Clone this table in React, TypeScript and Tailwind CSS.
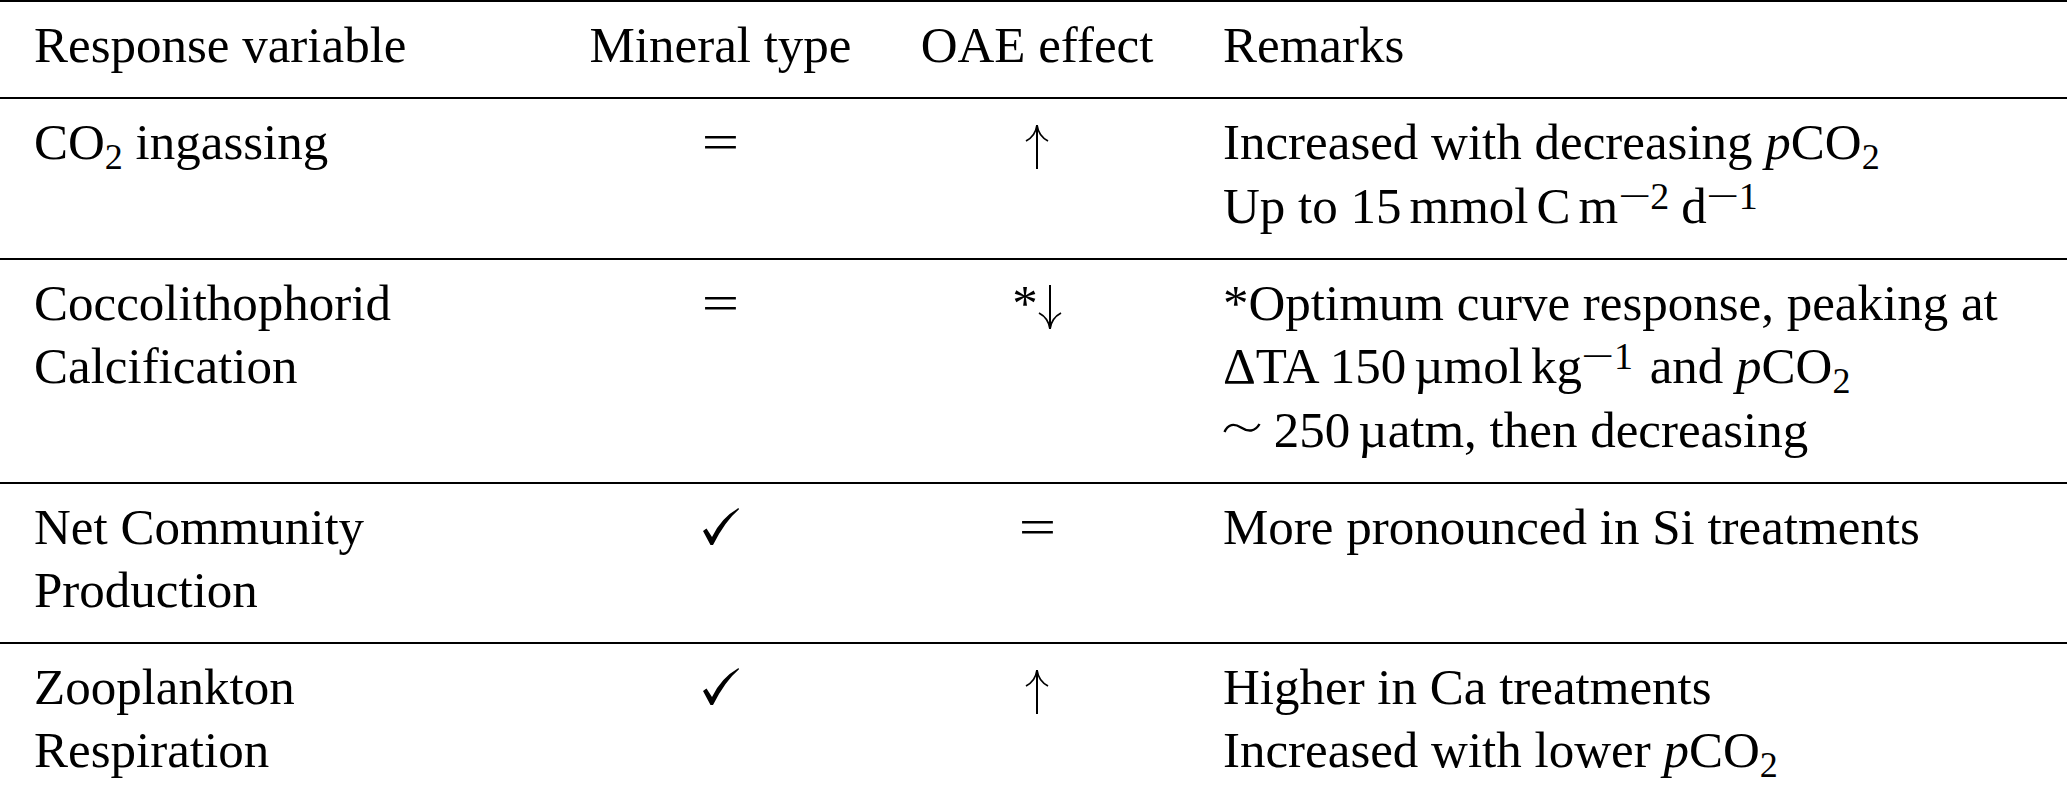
import React from 'react';

const Th = () => <span className="inline-block w-[8px]" />;

const Sub = ({ children }: { children: React.ReactNode }) => (
  <span className="text-[36px] leading-none align-[-10px]">{children}</span>
);

// superscript with a wide math-style minus
const Sup = ({ children }: { children: React.ReactNode }) => (
  <span className="text-[38px] leading-none align-[14px] pr-[4px]">
    <span className="inline-block w-[32px] text-center">
      <span className="inline-block scale-x-[1.55]">−</span>
    </span>
    {children}
  </span>
);

const PCO2 = () => (
  <>
    <i>p</i>CO<Sub>2</Sub>
  </>
);

const UpArrow = () => (
  <svg className="inline-block w-[24px] h-[45px] align-[-10px]" viewBox="0 0 24 45" fill="none" stroke="black" strokeWidth="2">
    <path d="M12 2 V45" />
    <path d="M12 1 Q10.5 12 1 17" strokeWidth="1.8" />
    <path d="M12 1 Q13.5 12 23 17" strokeWidth="1.8" />
  </svg>
);

const DownArrow = () => (
  <svg className="inline-block w-[24px] h-[45px] align-[-10px]" viewBox="0 0 24 45" fill="none" stroke="black" strokeWidth="2">
    <path d="M12 0 V43" />
    <path d="M12 44 Q10.5 33 1 28" strokeWidth="1.8" />
    <path d="M12 44 Q13.5 33 23 28" strokeWidth="1.8" />
  </svg>
);

const Check = () => (
  <svg className="inline-block w-[36px] h-[37px] align-[-1px]" viewBox="0 0 36 37" fill="black">
    <path d="M0 23 L3.5 20.5 L9 29 Q18 10 35.5 0 L36 1.2 Q22 13 10 37 L7.5 37 Z" />
  </svg>
);

const Tilde = () => (
  <svg className="inline-block w-[38px] h-[14px] align-[12px]" viewBox="0 0 38 14" fill="none" stroke="black" strokeWidth="2.4">
    <path d="M1.5 11 C5 3 11 2 18 6.5 C25 11 32 11 36.5 3" />
  </svg>
);

const Eq = () => <span className="inline-block scale-x-[1.3]">=</span>;

const rowCls = 'grid grid-cols-[554px_333px_300px_1fr] border-b-2 border-black';
const c1 = 'pl-[34px] pr-[35px] pt-3 pb-5 whitespace-nowrap';
const cMid = 'px-[20px] pt-3 pb-5 text-center whitespace-nowrap';
const c4 = 'pl-[36px] pr-[20px] pt-3 pb-5 whitespace-nowrap';

export default function App() {
  return (
    <div className="w-[2067px] bg-white text-black font-['Liberation_Serif','Times_New_Roman',serif] text-[51px] leading-[63px]">
      <div className="border-t-2 border-black">
        <div className={rowCls}>
          <div className={c1}>Response variable</div>
          <div className={cMid}>Mineral type</div>
          <div className={cMid}>OAE effect</div>
          <div className={c4}>Remarks</div>
        </div>

        <div className={rowCls}>
          <div className={c1}>
            CO<Sub>2</Sub> ingassing
          </div>
          <div className={cMid}>
            <Eq />
          </div>
          <div className={cMid}>
            <UpArrow />
          </div>
          <div className={c4}>
            Increased with decreasing <PCO2 />
            <br />
            Up to 15<Th />mmol<Th />C<Th />m<Sup>2</Sup>
            <Th />d<Sup>1</Sup>
          </div>
        </div>

        <div className={rowCls}>
          <div className={c1}>
            Coccolithophorid
            <br />
            Calcification
          </div>
          <div className={cMid}>
            <Eq />
          </div>
          <div className={cMid}>
            *<DownArrow />
          </div>
          <div className={c4}>
            *Optimum curve response, peaking at
            <br />
            ΔTA 150<Th />µmol<Th />kg<Sup>1</Sup> and <PCO2 />
            <br />
            <Tilde /> 250<Th />µatm, then decreasing
          </div>
        </div>

        <div className={rowCls}>
          <div className={c1}>
            Net Community
            <br />
            Production
          </div>
          <div className={cMid}>
            <Check />
          </div>
          <div className={cMid}>
            <Eq />
          </div>
          <div className={c4}>More pronounced in Si treatments</div>
        </div>

        <div className={rowCls}>
          <div className={c1}>
            Zooplankton
            <br />
            Respiration
          </div>
          <div className={cMid}>
            <Check />
          </div>
          <div className={cMid}>
            <UpArrow />
          </div>
          <div className={c4}>
            Higher in Ca treatments
            <br />
            Increased with lower <PCO2 />
          </div>
        </div>
      </div>
    </div>
  );
}
